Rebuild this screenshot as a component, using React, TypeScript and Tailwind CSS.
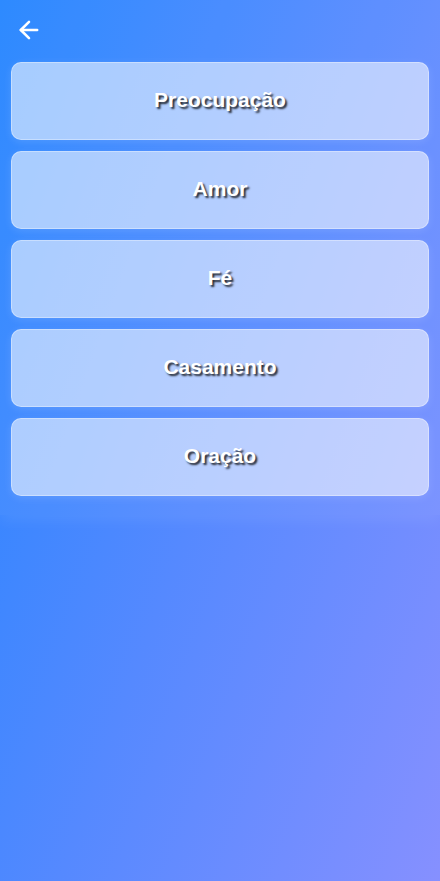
import React from "react";
import { ArrowLeft } from "lucide-react";

const items = ["Preocupação", "Amor", "Fé", "Casamento", "Oração"];

export default function App() {
  return (
    <div className="min-h-[881px] w-full bg-[linear-gradient(110deg,#2284ff_0%,#5589ff_50%,#8690ff_100%)] font-['Liberation_Sans',Arial,sans-serif]">
      <div className="bg-white/[0.05] shadow-[0_6px_14px_rgba(255,255,255,0.07)]">
        <div className="pl-[15px] pt-[16px]">
          <ArrowLeft size={28} strokeWidth={2.2} color="white" />
        </div>
        <div className="flex flex-col gap-[11px] px-[11px] pt-[18px] pb-[19px]">
          {items.map((t) => (
            <div
              key={t}
              className="flex h-[78px] items-center justify-center rounded-[10px] border border-white/35 bg-white/[0.57] shadow-[0_2px_8px_rgba(255,255,255,0.12)]"
            >
              <span className="-mt-[2px] text-[21px] font-bold text-white [text-shadow:2px_2px_2px_rgba(0,0,0,0.8)]">
                {t}
              </span>
            </div>
          ))}
        </div>
      </div>
    </div>
  );
}
